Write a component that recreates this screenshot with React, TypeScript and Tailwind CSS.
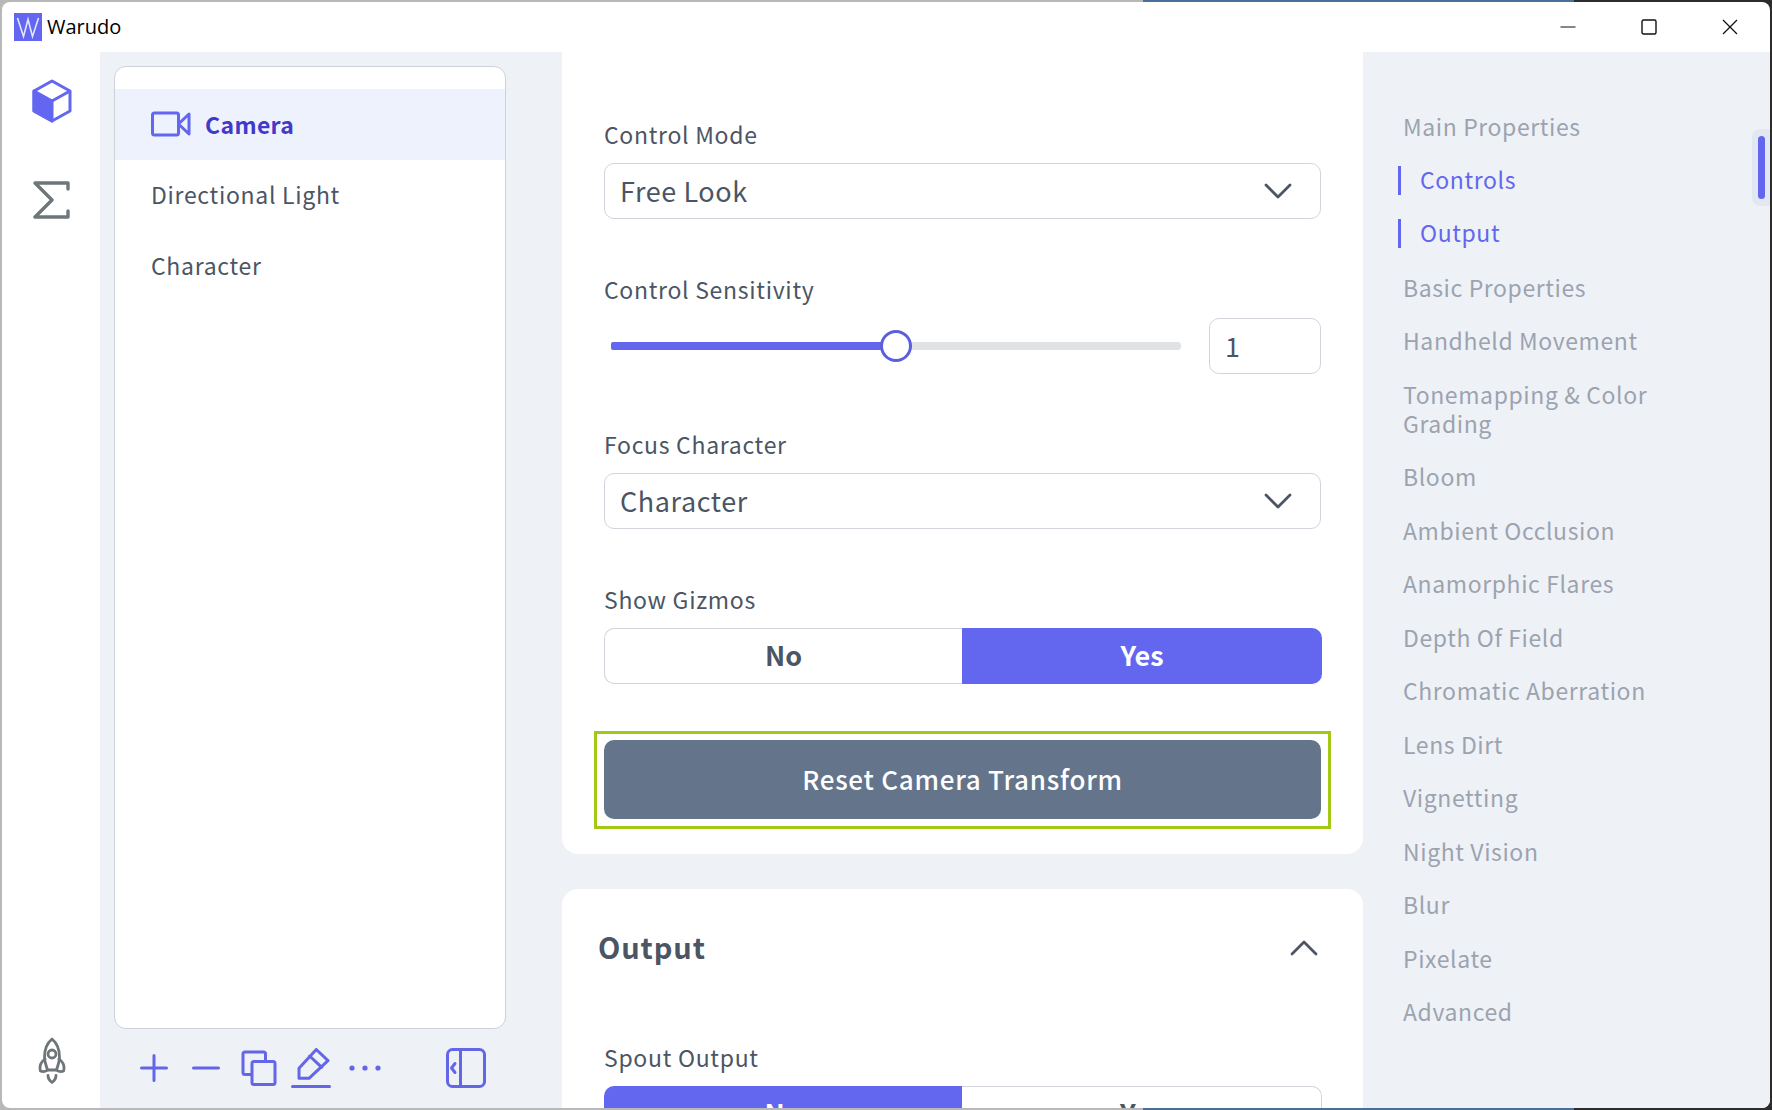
import React from "react";

const FONT = "font-['Noto_Sans_CJK_SC','Noto_Sans',sans-serif]";
const nav: [string, boolean][] = [
  ["Main Properties", false],
  ["Controls", true],
  ["Output", true],
  ["Basic Properties", false],
  ["Handheld Movement", false],
  ["Tonemapping & Color Grading", false],
  ["Bloom", false],
  ["Ambient Occlusion", false],
  ["Anamorphic Flares", false],
  ["Depth Of Field", false],
  ["Chromatic Aberration", false],
  ["Lens Dirt", false],
  ["Vignetting", false],
  ["Night Vision", false],
  ["Blur", false],
  ["Pixelate", false],
  ["Advanced", false],
];

function Label({ children }: { children: React.ReactNode }) {
  return <div className="h-[32px] text-[23px] leading-[32px] tracking-[0.7px] text-[#4b5563]">{children}</div>;
}

function Chevron() {
  return (
    <svg width="28" height="16" viewBox="0 0 28 16" fill="none" stroke="#4b5563" strokeWidth="2.8" strokeLinecap="round" strokeLinejoin="round">
      <path d="M2 2 L14 14 L26 2" />
    </svg>
  );
}

function Select({ value }: { value: string }) {
  return (
    <div className="mt-[13px] flex h-[56px] items-center justify-between rounded-[10px] border border-[#d1d5db] bg-white pl-[15px] pr-[28px]">
      <span className="text-[27px] leading-[36px] tracking-[0.6px] text-[#4b5563]">{value}</span>
      <Chevron />
    </div>
  );
}

function Toggle({ active }: { active: "No" | "Yes" }) {
  const on = "bg-[#6366ee] text-white";
  const off = "border border-[#d1d5db] bg-white text-[#4b5563]";
  return (
    <div className="mt-[13px] flex h-[56px] w-[718px] text-[27px] font-bold">
      <div className={`flex w-[358px] items-center justify-center rounded-l-[10px] pb-[2px] ${active === "No" ? on : off + " border-r-0"}`}>No</div>
      <div className={`flex flex-1 items-center justify-center rounded-r-[10px] pb-[2px] ${active === "Yes" ? on : off + " border-l-0"}`}>Yes</div>
    </div>
  );
}

export default function App() {
  return (
    <div className={`h-[1110px] w-[1772px] overflow-hidden bg-[linear-gradient(90deg,#b8b8b8_0%,#b8b8b8_64.5%,#47709a_64.5%,#47709a_88.8%,#2c2c2c_88.8%)] p-[2px] ${FONT}`}>
      <div className="flex h-[1106px] w-[1768px] flex-col overflow-hidden rounded-[8px] bg-white">
        {/* Title bar */}
        <div className="flex h-[50px] shrink-0 items-center">
          <svg className="ml-[12px]" width="28" height="28" viewBox="0 0 28 28">
            <rect width="28" height="28" fill="#6366f1" />
            <path d="M3.5 5 L9.5 23.5 L14 6.5 L18.5 23.5 L24.5 5" fill="none" stroke="#e4e6fd" strokeWidth="1.6" />
          </svg>
          <span className="ml-[5px] font-['Open_Sans',sans-serif] text-[20px] text-black">Warudo</span>
          <div className="ml-auto flex items-center">
            <svg width="16" height="16" viewBox="0 0 16 16" fill="none" stroke="#111" strokeWidth="1.2"><path d="M0.5 8 H15.5" /></svg>
            <svg className="ml-[65px]" width="16" height="16" viewBox="0 0 16 16" fill="none" stroke="#111" strokeWidth="1.4"><rect x="1" y="1" width="14" height="14" rx="1.5" /></svg>
            <svg className="ml-[65px] mr-[32px]" width="16" height="16" viewBox="0 0 16 16" fill="none" stroke="#111" strokeWidth="1.3"><path d="M1 1 L15 15 M15 1 L1 15" /></svg>
          </div>
        </div>

        {/* Body */}
        <div className="flex min-h-0 flex-1">
          {/* Rail */}
          <div className="flex w-[98px] shrink-0 flex-col items-center pl-[1px] pt-[27px]">
            <svg width="40" height="44" viewBox="0 0 40 44" fill="none" stroke="#6366f1" strokeWidth="3" strokeLinejoin="round" strokeLinecap="round">
              <path d="M2 12 L20 22 V42 L2 32 Z" fill="#6366f1" />
              <path d="M20 2 L38 12 V32 L20 42 L2 32 V12 Z M20 22 L38 12" />
            </svg>
            <svg className="mt-[58px]" width="37" height="38" viewBox="0 0 37 38" fill="none" stroke="#6e7679" strokeWidth="3.4" strokeLinejoin="round" strokeLinecap="round">
              <path d="M35 8 V2 H2 L19 19 L2 36 H35 V30" />
            </svg>
            <svg className="mb-[23px] mt-auto" width="28" height="48" viewBox="0 0 28 48" fill="none" stroke="#6e7679" strokeWidth="2.8" strokeLinejoin="round" strokeLinecap="round">
              <path d="M14 2 C8 7 6.5 14 6.5 20 C6.5 25 8 28 9.5 33 H18.5 C20 28 21.5 25 21.5 20 C21.5 14 20 7 14 2 Z" />
              <circle cx="14" cy="17" r="4" />
              <path d="M7 22 C3 25 1 29 2.5 34 C5 35 7.5 34.5 9.5 33 M21 22 C25 25 27 29 25.5 34 C23 35 20.5 34.5 18.5 33" />
              <path d="M10 38.5 C10 41.5 12 44 14 45.5 C16 44 18 41.5 18 38.5" />
            </svg>
          </div>

          {/* Main */}
          <div className="flex min-w-0 flex-1 bg-[#eef2f7]">
            {/* List column */}
            <div className="flex w-[462px] shrink-0 flex-col pl-[14px] pt-[14px]">
              <div className="h-[963px] w-[392px] rounded-[12px] border border-[#ccd1da] bg-white pt-[22px] text-[23px] tracking-[0.7px] text-[#4b5563]">
                <div className="flex h-[71px] items-center bg-[#eef2fd] pb-[1px] pl-[36px] font-bold tracking-[0.35px] text-[#4338ca]">
                  <svg width="40" height="26" viewBox="0 0 40 26" fill="none" stroke="#6366f1" strokeWidth="3" strokeLinejoin="round" strokeLinecap="round">
                    <rect x="1.5" y="2" width="26" height="22" rx="2" />
                    <path d="M38 3 V23 L27.5 13 Z" />
                  </svg>
                  <span className="ml-[14px]">Camera</span>
                </div>
                <div className="flex h-[71px] items-center pb-[2px] pl-[36px]">Directional Light</div>
                <div className="flex h-[71px] items-center pb-[2px] pl-[36px]">Character</div>
              </div>
              <div className="flex h-[78px] w-[392px] items-center">
                <svg className="ml-[26px]" width="28" height="28" viewBox="0 0 28 28" fill="none" stroke="#6366e6" strokeWidth="3" strokeLinecap="round"><path d="M14 1.5 V26.5 M1.5 14 H26.5" /></svg>
                <svg className="ml-[24px]" width="28" height="28" viewBox="0 0 28 28" fill="none" stroke="#6366e6" strokeWidth="3" strokeLinecap="round"><path d="M1.5 14 H26.5" /></svg>
                <svg className="ml-[21px]" width="36" height="36" viewBox="0 0 36 36" fill="none" stroke="#6366e6" strokeWidth="3" strokeLinejoin="round">
                  <path d="M11 24.5 H4 A2 2 0 0 1 2 22.5 V4 A2 2 0 0 1 4 2 H22.5 A2 2 0 0 1 24.5 4 V11" />
                  <rect x="11" y="11.5" width="23" height="23" rx="2" />
                </svg>
                <svg className="ml-[14px]" width="40" height="40" viewBox="0 0 40 40" fill="none" stroke="#6366e6" strokeWidth="3" strokeLinejoin="round" strokeLinecap="round">
                  <path d="M25.3 1.5 L37 12.7 L18 30.3 H8 V20.3 Z M18.7 8 L30.7 19.3" />
                  <path d="M1.5 38.5 H38.5" />
                </svg>
                <svg className="ml-[18px]" width="32" height="10" viewBox="0 0 32 10" fill="#6366e6">
                  <circle cx="3" cy="5" r="2.6" /><circle cx="16" cy="5" r="2.6" /><circle cx="29" cy="5" r="2.6" />
                </svg>
                <svg className="ml-[65px]" width="40" height="40" viewBox="0 0 40 40" fill="none" stroke="#6366e6" strokeWidth="3" strokeLinejoin="round" strokeLinecap="round">
                  <rect x="1.5" y="1.5" width="37" height="37" rx="5" />
                  <path d="M14.5 1.5 V38.5" />
                  <path d="M9 15.5 L5.5 20 L9 24.5" />
                </svg>
              </div>
            </div>

            {/* Center column */}
            <div className="flex w-[801px] shrink-0 flex-col">
              <div className="rounded-b-[16px] bg-white px-[42px] pb-[25px] pt-[66px]">
                <Label>Control Mode</Label>
                <Select value="Free Look" />
                <div className="mt-[54px]"><Label>Control Sensitivity</Label></div>
                <div className="mt-[13px] flex h-[56px] items-center">
                  <div className="relative ml-[7px] h-[8px] w-[570px] rounded-[3px] bg-[#e0e2e5]">
                    <div className="h-[8px] w-[285px] rounded-l-[2px] bg-[#6366ee]" />
                    <div className="absolute left-[269px] top-[-12px] h-[32px] w-[32px] rounded-full border-[3px] border-[#5b5fdc] bg-white" />
                  </div>
                  <div className="ml-auto flex h-[56px] w-[112px] items-center rounded-[10px] border border-[#d1d5db] pl-[15px] text-[27px] text-[#4b5563]">1</div>
                </div>
                <div className="mt-[54px]"><Label>Focus Character</Label></div>
                <Select value="Character" />
                <div className="mt-[54px]"><Label>Show Gizmos</Label></div>
                <Toggle active="Yes" />
                <div className="-mx-[10px] mt-[47px] border-[3px] border-[#a3c914] px-[7px] pb-[7px] pt-[6px]">
                  <div className="flex h-[79px] items-center justify-center rounded-[10px] bg-[#64748b] pb-[3px] text-[26px] font-medium tracking-[0.75px] text-white">
                    Reset Camera Transform
                  </div>
                </div>
              </div>
              <div className="mt-[35px] flex-1 rounded-t-[16px] bg-white px-[42px] pt-[39px]">
                <div className="-ml-[6px] flex h-[40px] items-center justify-between">
                  <span className="pb-[2px] text-[29px] font-bold tracking-[0.9px] text-[#4b5563]">Output</span>
                  <svg className="mr-[3px]" width="28" height="16" viewBox="0 0 28 16" fill="none" stroke="#4b5563" strokeWidth="2.8" strokeLinecap="round" strokeLinejoin="round"><path d="M2 14 L14 2 L26 14" /></svg>
                </div>
                <div className="mt-[73px]"><Label>Spout Output</Label></div>
                <Toggle active="No" />
              </div>
            </div>

            {/* Right nav */}
            <div className="relative min-w-0 flex-1 pl-[35px] pt-[60px]">
              <div className="flex w-[280px] flex-col gap-[24.5px] text-[23px] tracking-[0.6px]">
                {nav.map(([t, a]) => (
                  <div key={t} className={a ? "h-[29px] border-l-[3px] border-[#6366ee] pl-[19px] leading-[27px] text-[#6366ee]" : "pl-[5px] leading-[29px] text-[#9ca3af]"}>{t}</div>
                ))}
              </div>
              <div className="absolute right-0 top-[77px] h-[77px] w-[18px] rounded-l-[8px] bg-[#e2e8f3] py-[7px] pl-[6px]">
                <div className="h-[63px] w-[7px] rounded-[4px] bg-[#6366ee]" />
              </div>
            </div>
          </div>
        </div>
      </div>
    </div>
  );
}
